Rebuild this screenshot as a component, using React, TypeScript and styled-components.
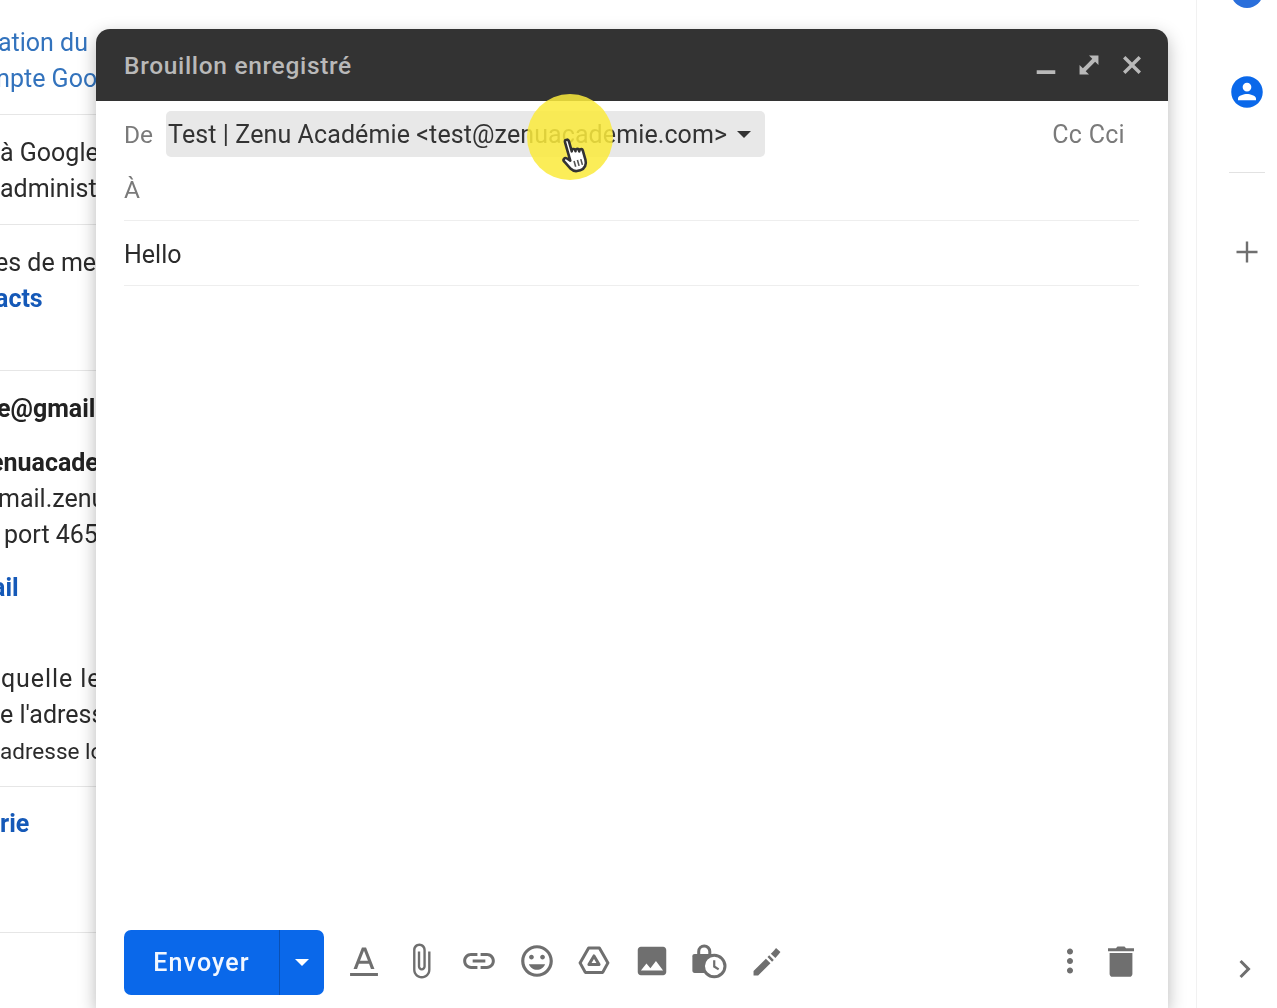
import React from "react";
import styled, { createGlobalStyle } from "styled-components";

const GlobalStyle = createGlobalStyle`
  html, body {
    margin: 0;
    padding: 0;
    height: 100%;
    background: #fff;
    overflow: hidden;
  }
  * {
    box-sizing: border-box;
  }
`;

const Page = styled.div`
  display: grid;
  grid-template-columns: 96px 1072px 28px 81px;
  height: 1008px;
  overflow: hidden;
  font-family: Roboto, "Liberation Sans", sans-serif;
  filter: blur(0.7px);
`;

const Settings = styled.div`
  overflow: hidden;
  white-space: nowrap;
`;

const Section = styled.div<{ $top: number; $bottom: number; $last?: boolean }>`
  padding-top: ${({ $top }) => $top}px;
  padding-bottom: ${({ $bottom }) => $bottom}px;
  border-bottom: ${({ $last }) => ($last ? "none" : "1px solid #e6e6e6")};
`;

const Line = styled.div<{ $gap?: number; $indent?: number; $small?: boolean; $wide?: boolean }>`
  height: 36px;
  line-height: 38px;
  margin-top: ${({ $gap }) => $gap || 0}px;
  text-indent: ${({ $indent }) => $indent || 0}px;
  font-size: ${({ $small }) => ($small ? 22.5 : 25)}px;
  letter-spacing: ${({ $wide }) => ($wide ? "0.9px" : "normal")};
  color: #2b2b2b;
`;

const LinkLine = styled(Line)`
  color: #3373bd;
`;

const BoldLine = styled(Line)`
  font-weight: 700;
  color: #222;
`;

const ActionLine = styled(Line)`
  font-weight: 700;
  color: #1559b8;
`;

const Compose = styled.div`
  position: relative;
  z-index: 1;
  display: flex;
  flex-direction: column;
  margin-top: 29px;
  background: #fff;
  border-radius: 14px 14px 0 0;
  box-shadow: 0 6px 18px rgba(0, 0, 0, 0.28);
`;

const Header = styled.div`
  display: flex;
  align-items: center;
  justify-content: space-between;
  height: 72px;
  padding: 0 18px 0 28px;
  background: #333;
  border-radius: 14px 14px 0 0;
  color: #b9b9b9;
`;

const Title = styled.div`
  font-size: 24.5px;
  font-weight: 500;
  letter-spacing: 0.67px;
`;

const WindowActions = styled.div`
  display: flex;
  align-items: center;
  gap: 7px;
`;

const WindowIcon = styled.svg`
  width: 36px;
  height: 36px;
  fill: #b9b9b9;
`;

const Fields = styled.div`
  padding: 0 29px 0 28px;
`;

const FromRow = styled.div`
  display: flex;
  align-items: center;
  height: 66px;
  padding: 10px 14px 10px 0;
`;

const FieldLabel = styled.div`
  font-size: 24.5px;
  color: #7a7a7a;
`;

const Sender = styled.div`
  display: flex;
  align-items: center;
  width: 599px;
  height: 46px;
  margin-left: 13px;
  padding-left: 2px;
  background: #e8e8e8;
  border-radius: 5px;
  font-size: 25px;
  letter-spacing: 0.1px;
  color: #333;
  white-space: nowrap;
`;

const Caret = styled.span<{ $color: string }>`
  width: 0;
  height: 0;
  border-left: 7.5px solid transparent;
  border-right: 7.5px solid transparent;
  border-top: 7.5px solid ${({ $color }) => $color};
`;

const SenderCaret = styled(Caret)`
  margin-left: 10px;
`;

const CopyLinks = styled.div`
  margin-left: auto;
  font-size: 25px;
  letter-spacing: 0.3px;
  color: #7a7a7a;
`;

const ToRow = styled.div`
  display: flex;
  align-items: center;
  height: 54px;
  padding-bottom: 8px;
  border-bottom: 1px solid #eee;
`;

const SubjectRow = styled.div`
  display: flex;
  align-items: center;
  height: 65px;
  padding-top: 2px;
  border-bottom: 1px solid #eee;
  font-size: 25px;
  color: #2b2b2b;
`;

const Highlight = styled.div`
  position: absolute;
  left: 431px;
  top: 65px;
  width: 86px;
  height: 86px;
  border-radius: 50%;
  background: rgba(250, 234, 60, 0.86);
`;

const Hand = styled.svg`
  position: absolute;
  left: 33px;
  top: 42px;
  width: 34px;
  height: 38px;
  transform: rotate(-16deg);
`;

const Toolbar = styled.div`
  display: flex;
  align-items: center;
  margin-top: auto;
  padding: 0 28px 13px;
`;

const SendButton = styled.div`
  display: flex;
  width: 200px;
  height: 65px;
  background: #0a68ea;
  border-radius: 7px;
  color: #f2f7ff;
`;

const SendLabel = styled.div`
  display: flex;
  align-items: center;
  justify-content: center;
  width: 156px;
  border-right: 1px solid #0a50b4;
  font-size: 25px;
  font-weight: 500;
  letter-spacing: 1.1px;
`;

const SendMenu = styled.div`
  display: flex;
  flex: 1;
  align-items: center;
  justify-content: center;
`;

const Formatting = styled.div`
  display: flex;
  margin-left: 11px;
`;

const ToolSlot = styled.div<{ $width?: number }>`
  display: flex;
  align-items: center;
  justify-content: center;
  width: ${({ $width }) => $width || 57.6}px;
`;

const ToolIcon = styled.svg`
  width: 38px;
  height: 38px;
  margin-top: -3px;
  fill: #6f6f6f;
`;

const ToolEnd = styled.div`
  display: flex;
  margin-left: auto;
  margin-right: -6px;
`;

const Rail = styled.div`
  display: flex;
  flex-direction: column;
  align-items: center;
  padding: 0 12px 21px 32px;
  border-left: 1px solid #f1f1f1;
`;

const PeekIcon = styled.div`
  flex: none;
  width: 32px;
  height: 32px;
  margin-top: -24px;
  border-radius: 50%;
  background: #2a6fdb;
`;

const RailIcon = styled.svg<{ $top: number }>`
  flex: none;
  width: 36px;
  height: 36px;
  margin-top: ${({ $top }) => $top}px;
  fill: #0a68ea;
`;

const RailRule = styled.div`
  flex: none;
  width: 36px;
  height: 1px;
  margin-top: 62px;
  background: #e2e2e2;
`;

const RailGlyph = styled.svg<{ $bottom?: boolean }>`
  flex: none;
  width: 36px;
  height: 36px;
  margin-top: ${({ $bottom }) => ($bottom ? "auto" : "61px")};
  fill: #6f6f6f;
`;

const Icon = ({ d }: { d: string }) => (
  <ToolIcon viewBox="0 0 24 24">
    <path d={d} />
  </ToolIcon>
);

const paths = {
  text: "M10.700 3.500 5.400 17h2.200l1.200-3.200h6.400l1.200 3.200h2.200L13.300 3.500h-2.600zM9.500 11.900 12 5.600l2.500 6.300h-5zM3.200 19.600h17.600v1.800H3.200z",
  attach:
    "M16.5 6v11.5c0 2.21-1.79 4-4 4s-4-1.79-4-4V5c0-1.38 1.12-2.5 2.5-2.5s2.5 1.12 2.5 2.5v10.5c0 .55-.45 1-1 1s-1-.45-1-1V6H10v9.5c0 1.38 1.12 2.5 2.5 2.5s2.5-1.12 2.5-2.5V5c0-2.21-1.79-4-4-4S7 2.79 7 5v12.5c0 3.04 2.46 5.5 5.5 5.5s5.500-2.460 5.500-5.500V6h-1.500z",
  link: "M3.9 12c0-1.71 1.39-3.1 3.1-3.1h4V7H7c-2.76 0-5 2.24-5 5s2.24 5 5 5h4v-1.9H7c-1.71 0-3.1-1.39-3.1-3.1zM8 13h8v-2H8v2zm9-6h-4v1.9h4c1.71 0 3.1 1.39 3.1 3.1s-1.39 3.1-3.1 3.1h-4V17h4c2.76 0 5-2.24 5-5s-2.24-5-5-5z",
  emoji:
    "M11.99 2C6.47 2 2 6.48 2 12s4.47 10 9.99 10C17.52 22 22 17.52 22 12S17.52 2 11.99 2zM12 20c-4.42 0-8-3.58-8-8s3.58-8 8-8 8 3.58 8 8-3.58 8-8 8zm3.5-9c.83 0 1.5-.67 1.5-1.5S16.33 8 15.5 8 14 8.67 14 9.5s.67 1.5 1.5 1.5zm-7 0c.83 0 1.5-.67 1.5-1.5S9.33 8 8.5 8 7 8.67 7 9.5 7.67 11 8.5 11zm3.5 6.5c2.33 0 4.31-1.46 5.11-3.5H6.89c.8 2.04 2.78 3.5 5.11 3.5z",
  image:
    "M21 19V5c0-1.1-.9-2-2-2H5c-1.1 0-2 .9-2 2v14c0 1.1.9 2 2 2h14c1.1 0 2-.9 2-2zM8.5 13.5l2.5 3.01L14.5 12l4.500 6H5l3.500-4.500z",
  pen: "M3.500 18.300 11.300 10.500l2.900 2.900L6.400 21.200H3.500v-2.900zM12.300 9.500l1.100-1.100 2.900 2.900-1.100 1.100-2.900-2.900zM14.400 7.400l1.300-1.300 1-1 1-1.300 2.800 2.500-.9 1.100-.1.200-2.200 2.500-2.900-2.700z",
  more: "M12 7.900c1.050 0 1.900-.85 1.900-1.900s-.85-1.900-1.900-1.900-1.900.85-1.900 1.900.85 1.900 1.900 1.900zm0 2.200c-1.050 0-1.900.85-1.900 1.900s.85 1.900 1.900 1.900 1.900-.85 1.900-1.900-.85-1.900-1.900-1.900zm0 6c-1.050 0-1.900.85-1.900 1.900s.85 1.900 1.900 1.900 1.900-.85 1.900-1.900-.85-1.900-1.900-1.900z",
  trash:
    "M4.800 20.200c0 1 .8 1.800 1.800 1.800h10.800c1 0 1.800-.8 1.800-1.800V7H4.800v13.200zM20.200 4h-5l-1-1.200H9.800L8.800 4h-5v1.800h16.400V4z",
};

const App: React.FC = () => {
  return (
    <>
      <GlobalStyle />
      <Page>
        <Settings>
          <Section $top={24} $bottom={18}>
            <LinkLine $indent={-2}>ation du</LinkLine>
            <LinkLine $indent={-12}>mpte Google</LinkLine>
          </Section>
          <Section $top={19} $bottom={18}>
            <Line>à Google</Line>
            <Line>administrateur</Line>
          </Section>
          <Section $top={19} $bottom={54}>
            <Line $indent={-5}>es de messagerie</Line>
            <ActionLine $indent={-5}>acts</ActionLine>
          </Section>
          <Section $top={19} $bottom={18}>
            <BoldLine $indent={-3}>e@gmail.com</BoldLine>
            <BoldLine $gap={18} $indent={-10}>enuacademie</BoldLine>
            <Line $indent={-2}>mail.zenuacademie</Line>
            <Line $indent={4}>port 465</Line>
            <ActionLine $gap={17} $indent={-8}>ail</ActionLine>
            <Line $gap={55} $indent={1} $wide>quelle les</Line>
            <Line>e l'adresse</Line>
            <Line $small>adresse login</Line>
          </Section>
          <Section $top={18} $bottom={91}>
            <ActionLine>rie</ActionLine>
          </Section>
          <Section $top={0} $bottom={0} $last />
        </Settings>

        <Compose>
          <Header>
            <Title>Brouillon enregistré</Title>
            <WindowActions>
              <WindowIcon viewBox="0 0 24 24">
                <path d="M5.800 15.500h12.400v2.500H5.800z" />
              </WindowIcon>
              <WindowIcon viewBox="0 0 24 24">
                <path d="M18.300 5.700V12l-2.200-2.200-6.300 6.300 2.200 2.200H5.700V12l2.200 2.200 6.300-6.300L12 5.700h6.300z" />
              </WindowIcon>
              <WindowIcon viewBox="0 0 24 24">
                <path d="M18 7.600 16.400 6 12 10.400 7.600 6 6 7.600 10.400 12 6 16.400 7.600 18 12 13.600 16.400 18 18 16.400 13.600 12z" />
              </WindowIcon>
            </WindowActions>
          </Header>

          <Fields>
            <FromRow>
              <FieldLabel>De</FieldLabel>
              <Sender>
                Test | Zenu Académie &lt;test@zenuacademie.com&gt;
                <SenderCaret $color="#333" />
              </Sender>
              <CopyLinks>Cc Cci</CopyLinks>
            </FromRow>
            <ToRow>
              <FieldLabel>À</FieldLabel>
            </ToRow>
            <SubjectRow>Hello</SubjectRow>
          </Fields>

          <Highlight>
            <Hand viewBox="0 0 34 38">
              <path
                d="M9 3.500c0-2.800 4-2.800 4 0V14c0-2.400 3.600-2.400 3.600 0v1c0-2.400 3.600-2.400 3.600 0v1.200c0-2.400 3.600-2.400 3.600 0V26c0 4.500-3 8.500-7.800 8.500h-2.500c-3 0-4.800-1.500-6.300-4L3 22c-1.500-2.600 1.500-4.400 3.400-2.400L9 22.500V3.500z"
                fill="#fff"
                stroke="#333"
                strokeWidth="2.600"
                strokeLinejoin="round"
              />
              <path d="M12.500 24v6M16 24v6M19.500 24v6" stroke="#555" strokeWidth="1.600" />
            </Hand>
          </Highlight>

          <Toolbar>
            <SendButton>
              <SendLabel>Envoyer</SendLabel>
              <SendMenu>
                <Caret $color="#fff" />
              </SendMenu>
            </SendButton>
            <Formatting>
              <ToolSlot>
                <Icon d={paths.text} />
              </ToolSlot>
              <ToolSlot>
                <Icon d={paths.attach} />
              </ToolSlot>
              <ToolSlot>
                <Icon d={paths.link} />
              </ToolSlot>
              <ToolSlot>
                <Icon d={paths.emoji} />
              </ToolSlot>
              <ToolSlot>
                <ToolIcon viewBox="0 0 24 24">
                  <path
                    d="M8.600 3.800h6.800l5.400 9.400-3.300 6H6.500l-3.300-6 5.400-9.400z"
                    fill="none"
                    stroke="#6f6f6f"
                    strokeWidth="1.900"
                    strokeLinejoin="round"
                  />
                  <path
                    d="M12 8.800l3.200 5.400H8.800L12 8.800z"
                    fill="none"
                    stroke="#6f6f6f"
                    strokeWidth="1.900"
                    strokeLinejoin="round"
                  />
                </ToolIcon>
              </ToolSlot>
              <ToolSlot>
                <Icon d={paths.image} />
              </ToolSlot>
              <ToolSlot>
                <ToolIcon viewBox="0 0 24 24">
                  <path
                    d="M5.500 8V6a3.500 3.500 0 0 1 7 0v2"
                    fill="none"
                    stroke="#6f6f6f"
                    strokeWidth="1.900"
                  />
                  <path d="M3 7.500h12.500c1 0 1.500.5 1.500 1.500v9c0 1-.5 1.500-1.500 1.500H3c-1 0-1.500-.5-1.500-1.500V9c0-1 .5-1.500 1.500-1.500z" />
                  <circle cx="15.300" cy="15.200" r="6.800" fill="#fff" stroke="#6f6f6f" strokeWidth="1.900" />
                  <path d="M15.300 11.500v4l2.800 1.800" fill="none" stroke="#6f6f6f" strokeWidth="1.400" />
                </ToolIcon>
              </ToolSlot>
              <ToolSlot>
                <Icon d={paths.pen} />
              </ToolSlot>
            </Formatting>
            <ToolEnd>
              <ToolSlot $width={51}>
                <Icon d={paths.more} />
              </ToolSlot>
              <ToolSlot $width={51}>
                <Icon d={paths.trash} />
              </ToolSlot>
            </ToolEnd>
          </Toolbar>
        </Compose>

        <div />

        <Rail>
          <PeekIcon />
          <RailIcon $top={66} viewBox="0 0 24 24">
            <path d="M12 1.500C6.200 1.500 1.500 6.200 1.500 12S6.200 22.500 12 22.500 22.500 17.800 22.500 12 17.800 1.500 12 1.500zm0 4.300a2.900 2.900 0 1 1 0 5.800 2.900 2.900 0 0 1 0-5.800zm6 11.700H6v-1.200c0-2 4-3 6-3s6 1 6 3v1.200z" />
          </RailIcon>
          <RailRule />
          <RailGlyph viewBox="0 0 24 24">
            <path d="M19 12.800h-6.200V19h-1.600v-6.200H5v-1.600h6.200V5h1.600v6.200H19v1.600z" />
          </RailGlyph>
          <RailGlyph $bottom viewBox="0 0 24 24">
            <path d="M7 16.600 11.600 12 7 7.400 8.400 6l6 6-6 6z" />
          </RailGlyph>
        </Rail>
      </Page>
    </>
  );
};

export default App;
